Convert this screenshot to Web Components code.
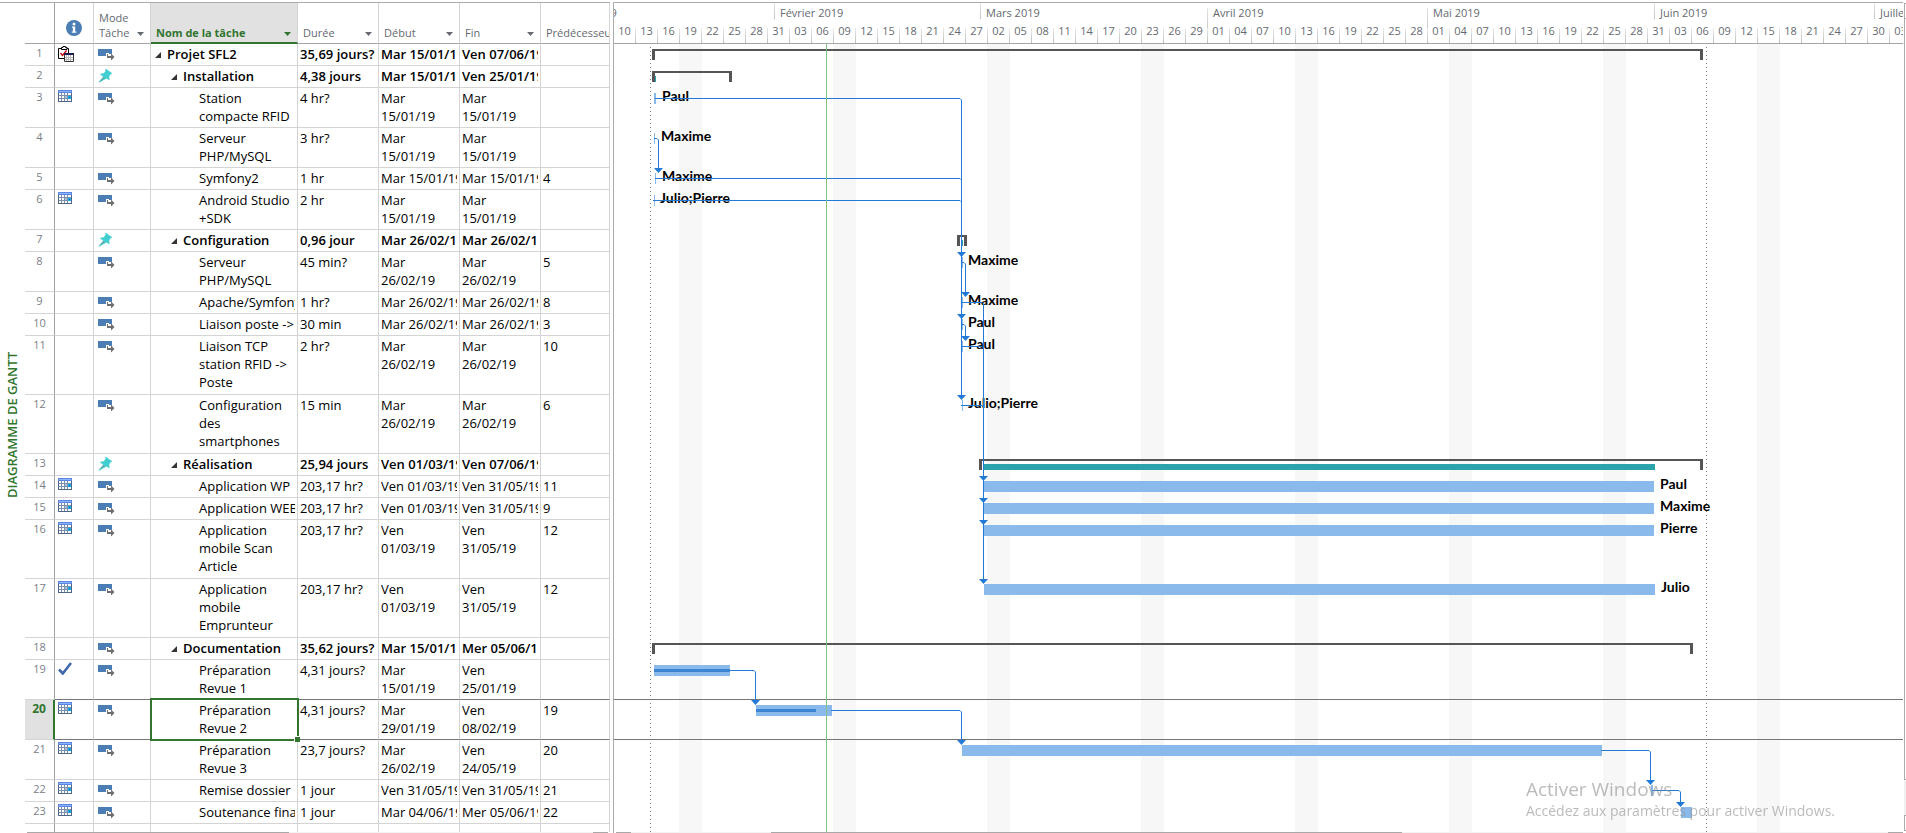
<!DOCTYPE html>
<html lang="fr">
<head>
<meta charset="utf-8">
<title>Diagramme de Gantt</title>
<style>
html, body { margin: 0; height: 100%; background: #fff; }
body { font-family: "Open Sans", "Noto Sans", sans-serif; font-size: 11px; color: #000; overflow: hidden; }
</style>
</head>
<body>
<project-view></project-view>

<script>
const ROW_HEIGHTS = { 1: 22, 2: 40, 3: 59 };
const AUTO = 'auto', PIN = 'pin';

/* n: number, i: indicator, m: mode, l: outline level, t: name, d: duration, s: start, f: finish, p: predecessors */
const TASKS = [
  { n: 1, i: 'clipboard', m: AUTO, l: 0, t: 'Projet SFL2', d: '35,69 jours?', s: 'Mar 15/01/19', f: 'Ven 07/06/19', p: '' },
  { n: 2, m: PIN, l: 1, t: 'Installation', d: '4,38 jours', s: 'Mar 15/01/19', f: 'Ven 25/01/19', p: '' },
  { n: 3, i: 'calendar', m: AUTO, l: 2, t: 'Station\ncompacte RFID', d: '4 hr?', s: 'Mar\n15/01/19', f: 'Mar\n15/01/19', p: '' },
  { n: 4, m: AUTO, l: 2, t: 'Serveur\nPHP/MySQL', d: '3 hr?', s: 'Mar\n15/01/19', f: 'Mar\n15/01/19', p: '' },
  { n: 5, m: AUTO, l: 2, t: 'Symfony2', d: '1 hr', s: 'Mar 15/01/19', f: 'Mar 15/01/19', p: '4' },
  { n: 6, i: 'calendar', m: AUTO, l: 2, t: 'Android Studio\n+SDK', d: '2 hr', s: 'Mar\n15/01/19', f: 'Mar\n15/01/19', p: '' },
  { n: 7, m: PIN, l: 1, t: 'Configuration', d: '0,96 jour', s: 'Mar 26/02/19', f: 'Mar 26/02/19', p: '' },
  { n: 8, m: AUTO, l: 2, t: 'Serveur\nPHP/MySQL', d: '45 min?', s: 'Mar\n26/02/19', f: 'Mar\n26/02/19', p: '5' },
  { n: 9, m: AUTO, l: 2, t: 'Apache/Symfony', d: '1 hr?', s: 'Mar 26/02/19', f: 'Mar 26/02/19', p: '8' },
  { n: 10, m: AUTO, l: 2, t: 'Liaison poste ->', d: '30 min', s: 'Mar 26/02/19', f: 'Mar 26/02/19', p: '3' },
  { n: 11, m: AUTO, l: 2, t: 'Liaison TCP\nstation RFID ->\nPoste', d: '2 hr?', s: 'Mar\n26/02/19', f: 'Mar\n26/02/19', p: '10' },
  { n: 12, m: AUTO, l: 2, t: 'Configuration\ndes\nsmartphones', d: '15 min', s: 'Mar\n26/02/19', f: 'Mar\n26/02/19', p: '6' },
  { n: 13, m: PIN, l: 1, t: 'Réalisation', d: '25,94 jours', s: 'Ven 01/03/19', f: 'Ven 07/06/19', p: '' },
  { n: 14, i: 'calendar', m: AUTO, l: 2, t: 'Application WP', d: '203,17 hr?', s: 'Ven 01/03/19', f: 'Ven 31/05/19', p: '11' },
  { n: 15, i: 'calendar', m: AUTO, l: 2, t: 'Application WEB', d: '203,17 hr?', s: 'Ven 01/03/19', f: 'Ven 31/05/19', p: '9' },
  { n: 16, i: 'calendar', m: AUTO, l: 2, t: 'Application\nmobile Scan\nArticle', d: '203,17 hr?', s: 'Ven\n01/03/19', f: 'Ven\n31/05/19', p: '12' },
  { n: 17, i: 'calendar', m: AUTO, l: 2, t: 'Application\nmobile\nEmprunteur', d: '203,17 hr?', s: 'Ven\n01/03/19', f: 'Ven\n31/05/19', p: '12' },
  { n: 18, m: AUTO, l: 1, t: 'Documentation', d: '35,62 jours?', s: 'Mar 15/01/19', f: 'Mer 05/06/19', p: '' },
  { n: 19, i: 'check', m: AUTO, l: 2, t: 'Préparation\nRevue 1', d: '4,31 jours?', s: 'Mar\n15/01/19', f: 'Ven\n25/01/19', p: '' },
  { n: 20, i: 'calendar', m: AUTO, l: 2, t: 'Préparation\nRevue 2', d: '4,31 jours?', s: 'Mar\n29/01/19', f: 'Ven\n08/02/19', p: '19', selected: true },
  { n: 21, i: 'calendar', m: AUTO, l: 2, t: 'Préparation\nRevue 3', d: '23,7 jours?', s: 'Mar\n26/02/19', f: 'Ven\n24/05/19', p: '20' },
  { n: 22, i: 'calendar', m: AUTO, l: 2, t: 'Remise dossier', d: '1 jour', s: 'Ven 31/05/19', f: 'Ven 31/05/19', p: '21' },
  { n: 23, i: 'calendar', m: AUTO, l: 2, t: 'Soutenance finale', d: '1 jour', s: 'Mar 04/06/19', f: 'Mer 05/06/19', p: '22' }
];

/* top of each row, counted from the bottom of the header */
const TOP = {};
{
  let y = 0;
  for (const task of TASKS) {
    task.lines = task.t.split('\n').length;
    TOP[task.n] = y;
    y += ROW_HEIGHTS[task.lines];
  }
}

/* ---------- icons ---------- */
const ICONS = {
  info: [16, 16, '<circle cx="8" cy="8" r="8" fill="#4a7eb5"/><circle cx="8" cy="4" r="1.5" fill="#fff"/><path d="M6 6.5h3.2v5h1.1v1.2H5.8v-1.2h1.1V7.7H6z" fill="#fff"/>'],
  auto: [17, 12, '<path d="M0 0h14v4H8v3H0z" fill="#4a7eb5"/><path d="M11 4h3v1h-3z" fill="#4a7eb5"/><path d="M9 5h1v2h3V4.500l3.500 3.500-3.500 3.500V9H9z" fill="#6e6e6e"/>'],
  pin: [15, 15, '<path d="M7.500 0.500 14.500 5.500 12.500 6.200 11.200 8.500 11.600 12.500 8.600 10.400 1.200 14.500 0.600 13.900 5.200 8.800 1.600 6.000 5.500 5.300 7.300 3.500z" fill="#41cfd1"/><path d="M.6 14.400 5.800 9l.8.8z" fill="#7d8b8f"/>'],
  calendar: [14, 12, '<path d="M0 0h14v12H0z" fill="#4f6688"/><path d="M0 0h14v3H0z" fill="#5b86e0"/><path d="M1 1h12v1H1z" fill="#8fb4ff"/><path d="M1 3h12v8H1z" fill="#fff"/><path d="M3.500 3v8M6.500 3v8M9.500 3v8M1 5.500h12M1 8.500h12" stroke="#7c90ac"/><path d="M10 6h3v3h-3z" fill="#16b0ee"/><path d="M7 6h2v2H7z" fill="#a9c0da"/><path d="M11 7h1v1h-1z" fill="#0a5fa8"/>'],
  check: [14, 13, '<path d="M1 7.500 4.800 11.500 13 1" fill="none" stroke="#3f68ad" stroke-width="2.600"/>'],
  clipboard: [16, 16, '<path d="M.500 2.500h10v10H.500z" fill="#fff" stroke="#000"/><path d="M3.500 3.500v-2h1.500V.5h2.500v1H9v2z" fill="#fff" stroke="#000"/><path d="M2.500 7l2 2.500L8.500 4.500" fill="none" stroke="#c00000" stroke-width="1.300"/><path d="M6.500 7.500h9v8h-9z" fill="#fff" stroke="#333"/><path d="M6 7h10v2H6z" fill="#1a1a4e"/><path d="M8.500 9v6M10.500 9v6M12.500 9v6M7 11.500h8M7 13.500h8" stroke="#bbb"/>']
};
customElements.define('task-icon', class extends HTMLElement {
  connectedCallback() {
    const [w, h, body] = ICONS[this.getAttribute('name')];
    this.attachShadow({ mode: 'open' }).innerHTML =
      `<style>:host{display:block;line-height:0}</style><svg width="${w}" height="${h}" viewBox="0 0 ${w} ${h}" aria-hidden="true">${body}</svg>`;
  }
});

/* ---------- column heading with its filter button ---------- */
customElements.define('column-heading', class extends HTMLElement {
  connectedCallback() {
    const filter = this.hasAttribute('filter')
      ? '<button type="button" aria-label="Filtrer"><svg width="7" height="4" viewBox="0 0 7 4"><path d="M0 0h7L3.500 4z" fill="currentColor"/></svg></button>' : '';
    this.attachShadow({ mode: 'open' }).innerHTML = `
      <style>
        :host { display: flex; align-items: flex-end; justify-content: space-between; height: 39px; box-sizing: border-box;
                padding: 0 6px 3px 5px; overflow: hidden; line-height: 15px; white-space: nowrap; }
        :host(:not([filter])) { padding-right: 0; }
        button { border: 0; padding: 0; margin: 0 0 4px; background: none; color: inherit; height: 4px; line-height: 0; flex: none; }
      </style><span><slot></slot></span>${filter}`;
  }
});

/* ---------- task sheet ---------- */
customElements.define('task-sheet', class extends HTMLElement {
  connectedCallback() {
    const cell = text => `<td><div class="clip">${text.replace('>', '&gt;')}</div></td>`;
    const rows = TASKS.map(k => `
      <tr class="r${k.lines}${k.l < 2 ? ' summary' : ''}${k.selected ? ' selected' : ''}">
        <th scope="row">${k.n}</th>
        <td class="ind">${k.i ? `<task-icon name="${k.i}"></task-icon>` : ''}</td>
        <td class="mode ${k.m}"><task-icon name="${k.m}"></task-icon></td>
        <td class="name"><div class="clip outline l${k.l}">${k.l < 2 ? '<svg width="6" height="6" viewBox="0 0 6 6"><path d="M6 0v6H0z" fill="#333"/></svg>' : '<i></i>'}<span>${k.t.replace('>', '&gt;')}</span></div></td>
        ${cell(k.d)}${cell(k.s)}${cell(k.f)}${cell(k.p)}
      </tr>`).join('');
    this.attachShadow({ mode: 'open' }).innerHTML = `
      <style>
        :host { display: flex; flex-direction: column; overflow: hidden; color: #000; }
        table { table-layout: fixed; width: 585px; border-collapse: separate; border-spacing: 0; flex: none; }
        th, td { box-sizing: border-box; padding: 0; vertical-align: top; text-align: left; border: solid #d4d4d4; border-width: 0 1px 1px 0; }
        thead th { height: 41px; font-weight: 400; color: #666a70; border-bottom-color: #a6a6a6; vertical-align: bottom; }
        thead th.sel { background: #e1e1e1; color: #31752f; font-weight: 700; border-bottom: 2px solid #31752f; }
        thead th.sel column-heading { height: 38px; padding-bottom: 2px; }
        thead th.info task-icon { padding: 0 0 7px 11px; }
        thead th:first-child, tbody th { border-right-color: #a0a0a0; }
        tbody th { font-weight: 400; color: #7a8087; text-align: center; line-height: 17px; }
        tbody td { font: 13px/18px "Open Sans", "Noto Sans", sans-serif; }
        .r1 { height: 22px; } .r2 { height: 40px; } .r3 { height: 59px; }
        .clip { overflow: hidden; white-space: pre; padding-top: 1px; margin: 0 2px 0 2px; }
        tbody td:last-child .clip { margin-right: 0; }
        .outline { display: flex; margin-left: 0; }
        .outline svg { flex: none; margin: 7px 6px 0 0; } .outline i { flex: none; width: 12px; }
        .l0 { padding-left: 4px; } .l1 { padding-left: 20px; } .l2 { padding-left: 36px; }
        .summary td { font-weight: 600; }
        .ind task-icon { margin: 2px 0 0 3px; }
        .mode task-icon { margin: 5px 0 0 4px; } .mode.pin task-icon { margin-top: 2px; }
        .r2:has(+ .selected) td, .selected td { border-bottom-color: #767676; }
        .selected th { background: #e1e1e1; color: #31752f; font-weight: 700; font-size: 12px; border-right: 2px solid #31752f; }
        .selected .name { position: relative; }
        .selected .name::before { content: ""; position: absolute; inset: -2px -2px -2px -1px; border: 2px solid #31752f; }
        .selected .name::after { content: ""; position: absolute; right: -3px; bottom: -3px; width: 5px; height: 5px; background: #31752f; border: solid #fff; border-width: 1px 0 0 1px; }
        .rest { flex: 1; display: flex; }
        .rest i { box-sizing: border-box; border-right: 1px solid #d4d4d4; }
      </style>
      <table>
        <colgroup><col style="width:30px"><col style="width:39px"><col style="width:57px"><col style="width:147px"><col style="width:81px"><col style="width:81px"><col style="width:81px"><col style="width:69px"></colgroup>
        <thead><tr>
          <th></th>
          <th class="info" scope="col" aria-label="Indicateurs"><task-icon name="info"></task-icon></th>
          <th scope="col"><column-heading filter>Mode<br>Tâche</column-heading></th>
          <th scope="col" class="sel"><column-heading filter>Nom de la tâche</column-heading></th>
          <th scope="col"><column-heading filter>Durée</column-heading></th>
          <th scope="col"><column-heading filter>Début</column-heading></th>
          <th scope="col"><column-heading filter>Fin</column-heading></th>
          <th scope="col"><column-heading>Prédécesseurs</column-heading></th>
        </tr></thead>
        <tbody>${rows}</tbody>
      </table>
      <div class="rest">${[30, 39, 57, 147, 81, 81, 81, 69].map((w, i) => `<i style="width:${w}px${i ? '' : ';border-color:#a0a0a0'}"></i>`).join('')}</div>`;
  }
});

/* ---------- time scale ---------- */
customElements.define('time-scale', class extends HTMLElement {
  connectedCallback() {
    const months = [['Janvier', 226], ['Février', 206], ['Mars', 227], ['Avril', 220, 1], ['Mai', 227, 1], ['Juin', 220], ['Juillet', 220]];
    let days = '';
    for (let k = 0; k < 75; k++) {
      const d = new Date(Date.UTC(2019, 0, 10 + 3 * k));
      days += `<span>${String(d.getUTCDate()).padStart(2, '0')}</span>`;
    }
    this.attachShadow({ mode: 'open' }).innerHTML = `
      <style>
        :host { display: flex; flex-direction: column; height: 41px; box-sizing: border-box; border-bottom: 1px solid #a6a6a6; overflow: hidden; color: #666a70; }
        div { display: flex; }
        .months { height: 25px; margin-left: -66px; line-height: 19px; }
        .days { height: 15px; line-height: 6px; }
        span { flex: none; box-sizing: border-box; }
        .months span { padding-left: 6px; background: linear-gradient(#e4e4e4, #c4c4c4) left top / 1px 16px no-repeat; }
        .months .long { background-size: 1px 25px; background-position: left 5px; }
        .days span { width: 22px; text-align: center; border-right: 1px solid; border-image: linear-gradient(#eee, #bbb) 1; border-width: 0 1px 0 0; }
      </style>
      <div class="months">${months.map(([m, w, long]) => `<span${long ? ' class="long"' : ''} style="width:${w}px">${m} 2019</span>`).join('')}</div>
      <div class="days">${days}</div>`;
  }
});

/* ---------- bars, links and resource names ---------- */
customElements.define('gantt-chart', class extends HTMLElement {
  connectedCallback() {
    const summaries = [[1, 38, 1089], [2, 38, 118], [7, 343, 353], [13, 365, 1089], [18, 38, 1079]];
    const done = [[2, 41, 1], [7, 348, 1], [13, 370, 671]];
    const bars = [[3, 40, 2], [4, 40, 1], [5, 41, 1], [6, 40, 1], [8, 348, 1], [9, 348, 1], [10, 348, 1], [11, 348, 1], [12, 348, 1],
      [14, 370, 670], [15, 370, 670], [16, 370, 670], [17, 370, 671], [19, 40, 76, 76], [20, 142, 76, 60], [21, 348, 640], [22, 1037, 2], [23, 1067, 11]];
    /* from row, to row, start x, elbow x */
    const links = [[3, 10, 41, 347], [4, 5, 40, 44], [5, 8, 41, 347], [6, 12, 39, 347], [8, 9, 348, 351], [10, 11, 348, 351],
      [9, 15, 348, 369], [11, 14, 348, 369], [12, 16, 347, 369], [12, 17, 347, 369], [19, 20, 116, 141], [20, 21, 217, 347], [21, 22, 987, 1036], [22, 23, 1038, 1066]];
    const names = [[3, 48, 'Paul'], [4, 47, 'Maxime'], [5, 48, 'Maxime'], [6, 46, 'Julio;Pierre'], [8, 354, 'Maxime'], [9, 354, 'Maxime'], [10, 354, 'Paul'],
      [11, 354, 'Paul'], [12, 354, 'Julio;Pierre'], [14, 1046, 'Paul'], [15, 1046, 'Maxime'], [16, 1046, 'Pierre'], [17, 1047, 'Julio']];
    const rect = (x, y, w, h, c) => `<rect x="${x}" y="${y}" width="${w}" height="${h}" fill="${c}" shape-rendering="crispEdges"/>`;
    let s = '';
    for (let x = 65; x < 2400; x += 154) s += rect(x, 0, 23, '100%', '#f7f7f7');
    for (const x of [36, 1092]) s += `<line x1="${x}.500" x2="${x}.500" y1="3" y2="100%" stroke="#7d7d7d" stroke-dasharray="1 3"/>`;
    for (const [r, a, b] of summaries) s += `<path d="M${a} ${TOP[r] + 16}v-11h${b - a}v11h-3v-9h${a - b + 6}v9z" fill="#555"/>`;
    for (const [r, x, w] of done) s += rect(x, TOP[r] + 10, w, 6, '#2aa3ac');
    for (const [r, x, w, p] of bars) {
      s += rect(x, TOP[r] + 5, w, 11, '#8abaeb');
      if (p) s += rect(x, TOP[r] + 9, p, 3, '#3d85d3');
    }
    for (const [r, x, t] of names) s += `<text x="${x}" y="${TOP[r] + 13}">${t}</text>`;
    for (const y of [TOP[20] - 1, TOP[21] - 1]) s += rect(0, y, '100%', 1, '#767676');
    for (const [a, b, x, e] of links) {
      const y = TOP[a] + 10;
      s += `<path d="M${x} ${y}.500H${e - 1}l1.500 1.500V${TOP[b]}" fill="none" stroke="#227ad6"/><path d="M${e - 4} ${TOP[b]}h9l-4.500 5z" fill="#227ad6"/>`;
    }
    s += rect(212, 0, 1, '100%', '#86c286');
    this.attachShadow({ mode: 'open' }).innerHTML = `
      <style>
        :host { display: block; overflow: hidden; }
        svg { display: block; width: 100%; height: 100%; }
        text { font: 700 14px Lato, sans-serif; }
      </style><svg role="img" aria-label="Diagramme de Gantt">${s}</svg>`;
  }
});

/* ---------- scroll bar edges ---------- */
customElements.define('scroll-edge', class extends HTMLElement {
  connectedCallback() {
    this.attachShadow({ mode: 'open' }).innerHTML = `
      <style>
        :host { display: flex; height: 1px; box-sizing: border-box; background: #f3f3f3; justify-content: space-between; }
        i { background: #a8a8a8; }
        .end { width: 15px; }
      </style><i style="width:var(--first)"></i><i style="width:var(--second, 0px);margin-right:auto;margin-left:var(--thumb, 0px)"></i><i class="end"></i>`;
  }
});
customElements.define('scroll-column', class extends HTMLElement {
  connectedCallback() {
    this.attachShadow({ mode: 'open' }).innerHTML = `
      <style>
        :host { display: flex; flex-direction: column; width: 2px; box-sizing: border-box; padding: 1px 0 2px; }
        i { box-sizing: border-box; border-left: 1px solid #ababab; }
        .b { height: 16px; border-top: 1px solid #ababab; border-bottom: 1px solid #ababab; flex: none; }
        .t { flex: 1; border-bottom: 1px solid #ababab; }
        .g { height: 35px; border-color: #eee; flex: none; background: #f3f3f3; }
      </style><i class="b"></i><i class="t"></i><i class="g"></i><i class="b"></i>`;
  }
});

/* ---------- activation notice over the desktop ---------- */
customElements.define('activation-notice', class extends HTMLElement {
  connectedCallback() {
    this.attachShadow({ mode: 'open' }).innerHTML = `
      <style>
        :host { display: block; position: fixed; right: 71px; bottom: 12px; color: rgba(150, 150, 150, .65); white-space: nowrap; pointer-events: none; }
        ::slotted(*) { display: block; }
        ::slotted([slot=title]) { font-size: 19px; line-height: 24px; }
        ::slotted([slot=hint]) { font-size: 14px; line-height: 20px; }
      </style><slot name="title"></slot><slot name="hint"></slot>`;
  }
});

/* ---------- whole view ---------- */
customElements.define('project-view', class extends HTMLElement {
  connectedCallback() {
    this.attachShadow({ mode: 'open' }).innerHTML = `
      <style>
        :host { display: flex; height: 100vh; box-sizing: border-box; padding-top: 2px; }
        .rail { width: 25px; flex: none; border-top: 1px solid #ababab; box-sizing: border-box; display: flex; align-items: center; justify-content: center; padding-top: 14px; }
        .rail span { writing-mode: vertical-rl; transform: rotate(180deg); font-size: 13px; font-weight: 600; line-height: 25px; color: #31752f; white-space: nowrap; }
        .left { display: flex; flex-direction: column; width: 585px; flex: none; border-top: 1px solid #ababab; }
        .left task-sheet { flex: 1; min-height: 0; }
        .left scroll-edge { margin: 0 2px; --first: 262px; }
        .split { width: 3px; flex: none; }
        .right { display: flex; flex-direction: column; flex: 1; min-width: 0; border-top: 1px solid #ababab; border-left: 1px solid #ababab; }
        .right gantt-chart { flex: 1; min-height: 0; }
        .right scroll-edge { margin-left: 2px; --first: 15px; --thumb: 140px; --second: 631px; }
        scroll-column { margin-left: 1px; flex: none; }
      </style>
      <div class="rail"><span>DIAGRAMME DE GANTT</span></div>
      <div class="left"><task-sheet></task-sheet><scroll-edge></scroll-edge></div>
      <div class="split"></div>
      <div class="right"><time-scale></time-scale><gantt-chart></gantt-chart><scroll-edge></scroll-edge></div>
      <scroll-column></scroll-column>
      <activation-notice><span slot="title">Activer Windows</span><span slot="hint">Accédez aux paramètres pour activer Windows.</span></activation-notice>`;
  }
});
</script>
</body>
</html>
